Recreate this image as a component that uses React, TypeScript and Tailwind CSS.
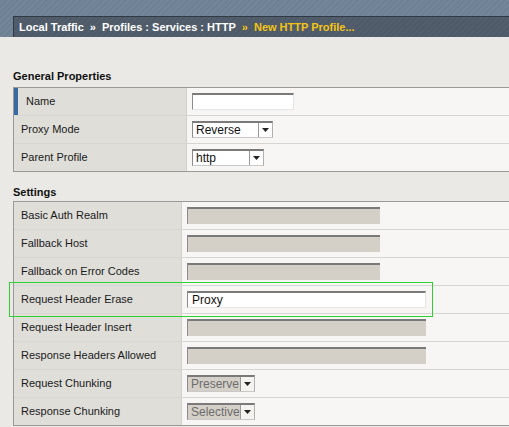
import React from 'react'

const font = { fontFamily: '"Liberation Sans", Arial, Helvetica, sans-serif' }

function Arrow({ disabled }: { disabled?: boolean }) {
  return (
    <span
      className={`flex h-full w-[14px] items-center justify-center border-l border-[#9a9a9a] ${
        disabled ? 'bg-[#f4f3f0]' : 'bg-white'
      }`}
    >
      <svg width="7" height="4" viewBox="0 0 7 4">
        <path d="M0 0h7L3.5 4z" fill="#222" />
      </svg>
    </span>
  )
}

function Select({ value, width, disabled }: { value: string; width: string; disabled?: boolean }) {
  return (
    <div
      className={`flex h-[17px] items-center border-t-2 border-l border-r border-b border-t-[#7a7a7a] border-l-[#8a8a8a] border-r-[#b0b0b0] border-b-[#c8c8c8] ${width} ${
        disabled ? 'bg-[#d4d0c8] text-[#6d6d6d]' : 'bg-white text-[#111]'
      }`}
    >
      <span className="flex-1 pl-[3px] text-[12px] leading-none">{value}</span>
      <Arrow disabled={disabled} />
    </div>
  )
}

function TextInput({ width, disabled, value }: { width: string; disabled?: boolean; value?: string }) {
  return (
    <div
      className={`flex h-[17px] items-center border-t-2 border-l border-t-[#7a7a7a] border-l-[#8d8d8d] ${width} ${
        disabled ? 'bg-[#d4d0c8]' : 'bg-white border-r border-b border-r-[#e6e6e6] border-b-[#e6e6e6]'
      }`}
    >
      {value && <span className="pl-[4px] text-[12px] leading-none text-[#111]">{value}</span>}
    </div>
  )
}

type Row = { label: string; control: React.ReactNode; marked?: boolean; highlight?: boolean }

function Table({ rows, labelWidth }: { rows: Row[]; labelWidth: string }) {
  return (
    <div className="ml-[13px] border-t border-l border-[#999999]">
      {rows.map((r, i) => (
        <div
          key={r.label}
          className={`relative flex h-[28px] border-b ${i < rows.length - 1 ? 'border-[#d6d5d1]' : 'border-[#999999]'}`}
        >
          <div
            className={`flex shrink-0 items-center bg-[#dfded9] border-r border-[#d0cfcb] text-[11px] text-[#1a1a1a] ${labelWidth} ${
              r.marked ? 'border-l-[4px] border-l-[#3a6a9f] pl-[8px]' : 'pl-[7px]'
            }`}
          >
            {r.label}
          </div>
          <div className="flex flex-1 items-center bg-[#f7f6f4] pl-[5px]">{r.control}</div>
          {/* highlight frame drawn over the row */}
          {r.highlight && (
            <div className="pointer-events-none absolute left-[-5px] top-[-4px] z-10 h-[35px] w-[424px] border-[1.5px] border-[#2fd02f]" />
          )}
        </div>
      ))}
    </div>
  )
}

export default function App() {
  const general: Row[] = [
    { label: 'Name', marked: true, control: <TextInput width="w-[102px]" /> },
    { label: 'Proxy Mode', control: <Select value="Reverse" width="w-[81px]" /> },
    { label: 'Parent Profile', control: <Select value="http" width="w-[72px]" /> },
  ]
  const settings: Row[] = [
    { label: 'Basic Auth Realm', control: <TextInput width="w-[193px]" disabled /> },
    { label: 'Fallback Host', control: <TextInput width="w-[193px]" disabled /> },
    { label: 'Fallback on Error Codes', control: <TextInput width="w-[193px]" disabled /> },
    { label: 'Request Header Erase', highlight: true, control: <TextInput width="w-[239px]" value="Proxy" /> },
    { label: 'Request Header Insert', control: <TextInput width="w-[239px]" disabled /> },
    { label: 'Response Headers Allowed', control: <TextInput width="w-[239px]" disabled /> },
    { label: 'Request Chunking', control: <Select value="Preserve" width="w-[68px]" disabled /> },
    { label: 'Response Chunking', control: <Select value="Selective" width="w-[68px]" disabled /> },
  ]

  return (
    <div className="h-[427px] w-[509px] overflow-hidden bg-[#eae9e5]" style={font}>
      {/* header strip */}
      <div className="h-[37px] bg-[repeating-linear-gradient(135deg,#6e8094_0px,#6e8094_2px,#74869a_2px,#74869a_4px)] pt-[16px]">
        <div className="ml-[13px] flex h-[21px] items-center gap-[6px] border-t border-l border-[#2f3a45] bg-[repeating-linear-gradient(135deg,#4e5a68_0px,#4e5a68_2px,#525e6c_2px,#525e6c_4px)] pl-[5px] text-[11px] font-bold text-white">
          <span>Local Traffic</span>
          <span>»</span>
          <span>Profiles : Services : HTTP</span>
          <span className="text-[#f4c414]">»</span>
          <span className="text-[#f4c414]">New HTTP Profile...</span>
        </div>
      </div>

      <div className="ml-[13px] mt-[34px] text-[11px] font-bold leading-none text-[#111]">General Properties</div>
      <div className="mt-[5px]">
        <Table rows={general} labelWidth="w-[173px]" />
      </div>

      <div className="ml-[13px] mt-[15px] text-[11px] font-bold leading-none text-[#111]">Settings</div>
      <div className="mt-[3px]">
        <Table rows={settings} labelWidth="w-[168px]" />
      </div>
    </div>
  )
}
